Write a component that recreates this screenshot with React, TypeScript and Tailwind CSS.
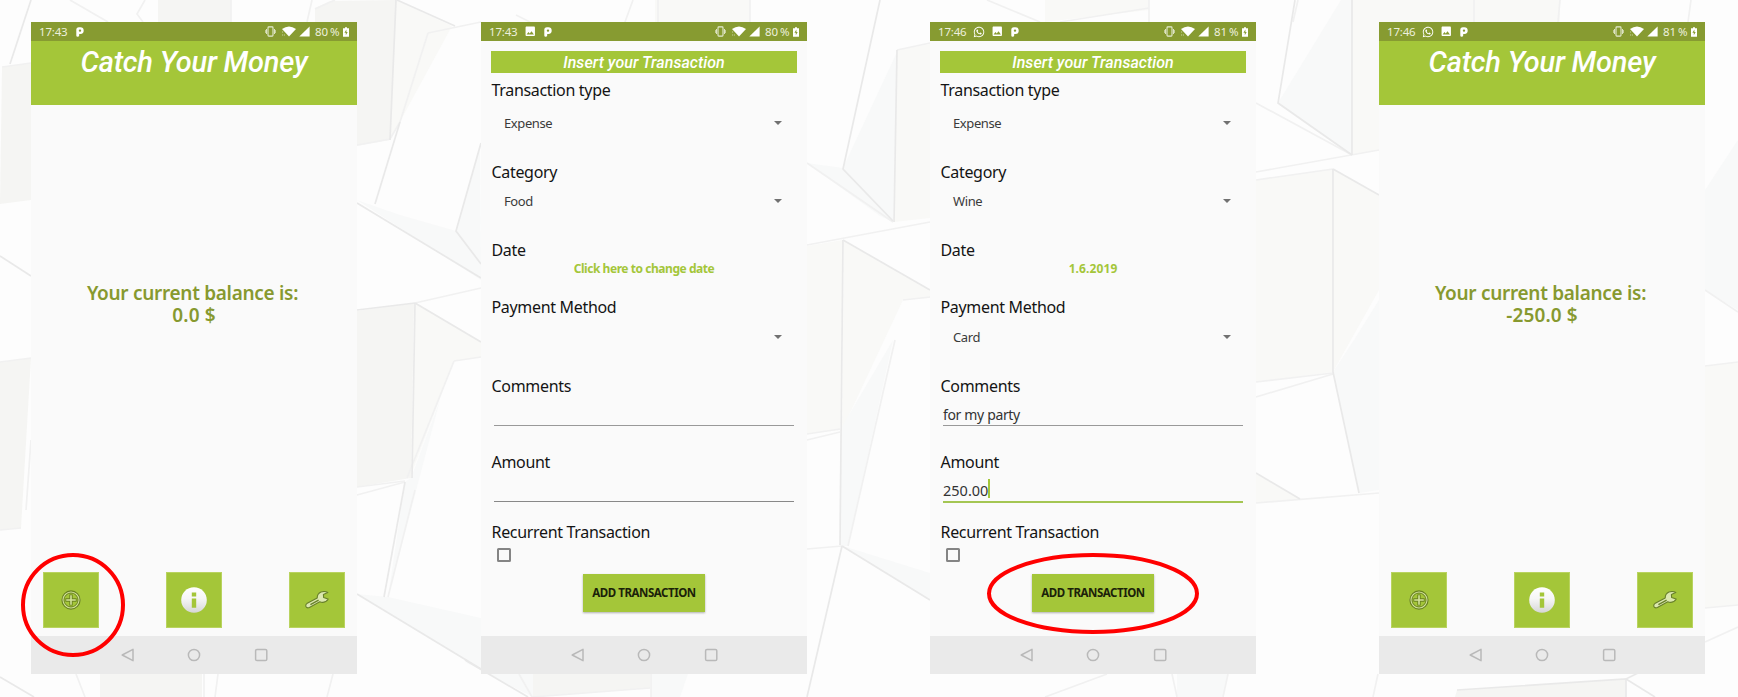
import type { ReactNode } from "react";
import { FaWhatsapp } from "react-icons/fa";
import { MdImage } from "react-icons/md";

type Notice = "whatsapp" | "image" | "p";

const warmFaces = [
  "2,67 31,63 31,200 0,204",
  "0,362 31,358 21,528 0,530",
  "100,674 202,674 202,697 100,697",
  "158,0 231,0 231,22 158,22",
  "315,8 330,1 396,0 390,140 357,146 357,22 315,22",
  "357,311 414,303 411,478 357,487",
  "533,674 650,674 650,688 533,697",
  "1457,690 1626,679 1626,697 1455,697",
];
const creamFaces = [
  "655,0 750,0 750,22 655,22",
  "1705,366 1738,362 1738,605 1705,608",
  "396,0 452,26 390,140",
  "415,303 481,342 481,357 454,361 411,475",
  "1045,0 1149,0 1149,10 1045,22",
  "897,50 930,44 930,218 894,222",
  "807,246 843,240 840,430 807,434",
  "844,240 930,290 930,298 903,300 842,430",
  "1353,0 1379,0 1379,150 1353,155",
  "1256,180 1333,169 1333,372 1256,382",
  "1334,169 1379,195 1379,290 1334,370",
  "1352,0 1560,0 1560,22 1352,22",
  "1256,474 1300,499 1256,503",
];
const coolFaces = [
  "480,144 456,231 481,264",
  "357,200 400,215 456,231 481,264 481,280",
  "388,597 481,618 481,669 357,594",
  "411,478 440,400 388,597 405,482",
  "897,52 843,168 893,222",
  "807,163 843,168 893,222 880,216",
  "840,430 893,340 848,546 840,546",
  "843,546 930,573 930,600",
  "1341,0 1278,103 1352,155 1353,0",
  "1379,300 1354,340 1333,372 1359,493 1379,490",
  "1738,140 1705,190 1705,290 1738,310",
  "1177,674 1228,674 1223,697 1177,697",
  "465,662 533,674 533,697",
  "651,674 688,674 680,697 651,697",
];
const strongEdges = [
  "0,256 31,276",
  "0,677 34,697",
  "10,64 31,0",
  "397,0 455,26",
  "396,0 390,140",
  "400,122 375,204",
  "357,203 481,278",
  "481,143 456,231 481,264",
  "357,310 415,303",
  "415,303 412,478",
  "415,303 481,342",
  "405,482 384,597",
  "357,594 481,669",
  "465,660 528,697",
  "880,0 843,169 893,221",
  "897,50 894,222",
  "843,240 930,290",
  "843,240 840,545",
  "842,546 807,697",
  "842,546 930,600",
  "1295,0 1278,103 1352,155",
  "1352,0 1352,155",
  "1333,169 1333,372 1359,493",
  "1333,169 1379,195",
  "1256,473 1300,499",
  "1457,690 1626,679 1626,697",
  "1626,679 1655,697",
  "1626,679 1640,672",
];
const softEdges = [
  "428,33 400,122",
  "2,67 31,63",
  "0,362 31,358",
  "0,530 21,528",
  "31,440 26,510",
  "76,674 85,697",
  "204,674 204,697",
  "218,674 215,697",
  "333,674 327,697",
  "70,0 108,22",
  "145,0 137,14 143,22",
  "231,0 231,22",
  "312,0 307,22",
  "315,9 335,0",
  "357,145 390,139 400,122",
  "428,33 481,22",
  "415,303 481,288",
  "357,487 405,481",
  "357,495 405,482",
  "415,490 388,597",
  "454,361 407,478",
  "454,361 481,357",
  "516,15 530,22",
  "633,0 625,22",
  "658,0 658,22",
  "750,0 750,22",
  "519,674 532,697 650,688",
  "651,674 651,697",
  "897,50 930,43",
  "807,163 893,222",
  "807,245 930,222",
  "807,434 840,429",
  "807,440 840,432",
  "895,340 848,546",
  "807,549 842,546",
  "903,300 930,297",
  "987,0 1040,22",
  "1060,22 1149,8",
  "1149,0 1149,22",
  "1107,674 1045,697",
  "1172,674 1177,697",
  "1228,674 1223,697",
  "1378,674 1373,697",
  "1298,0 1293,22",
  "1256,103 1352,155",
  "1256,172 1379,150",
  "1256,180 1333,169",
  "1256,382 1333,373",
  "1256,397 1333,374",
  "1256,503 1379,493",
  "1474,0 1474,22",
  "1560,0 1558,22",
  "1691,0 1688,22",
  "1705,290 1738,312",
  "1705,366 1738,362",
  "1705,608 1738,605",
  "1705,642 1738,627",
];

function Backdrop() {
  return (
    <svg className="absolute inset-0 h-[697px] w-[1738px]" viewBox="0 0 1738 697" fill="none" aria-hidden="true">
      {warmFaces.map((p) => (
        <polygon key={p} points={p} fill="#f5f5f3" />
      ))}
      {creamFaces.map((p) => (
        <polygon key={p} points={p} fill="#f9f9f7" />
      ))}
      {coolFaces.map((p) => (
        <polygon key={p} points={p} fill="#f8f9f9" />
      ))}
      {softEdges.map((p) => (
        <polyline key={p} points={p} stroke="#f1f1f1" strokeWidth="1.7" />
      ))}
      {strongEdges.map((p) => (
        <polyline key={p} points={p} stroke="#e9e9e9" strokeWidth="1.7" />
      ))}
    </svg>
  );
}

function PIcon() {
  return (
    <svg className="h-[10px] w-2" viewBox="0 0 8 10">
      <path
        fillRule="evenodd"
        fill="#fff"
        d="M0.3 2.8Q0.3 0.2 2.9 0.2H4.2A3.4 3.4 0 0 1 4.4 7H3.2V8.4Q3 9.8 1.7 9.8Q0.3 9.8 0.3 8.4ZM4 2.4A1.2 1.2 0 1 0 4 4.8A1.2 1.2 0 1 0 4 2.4Z"
      />
    </svg>
  );
}

function StatusBar({ time, battery, notices }: { time: string; battery: string; notices: Notice[] }) {
  return (
    <div className="flex h-[19px] shrink-0 items-center bg-[#879b31] pr-[8px] pl-[8px] text-[11.5px] leading-[19px] text-[#edf0de]">
      <span className="w-[28px] whitespace-nowrap tracking-[-0.2px]">{time}</span>
      <div className="ml-[8px] flex items-center gap-[8px]">
        {notices.map((n) => (
          <span key={n} className="flex w-[10px] justify-center text-white">
            {n === "whatsapp" && <FaWhatsapp className="size-[12px] shrink-0" />}
            {n === "image" && <MdImage className="size-[12.5px] shrink-0" />}
            {n === "p" && <PIcon />}
          </span>
        ))}
      </div>
      <div className="ml-auto flex items-center">
        <svg className="mr-[6px] h-[11px] w-[11px]" viewBox="0 0 11 11" fill="none" stroke="#e6ebd3">
          <rect x="3" y="0.9" width="5" height="9.2" rx="0.8" strokeWidth="1.1" />
          <path d="M1.5 3v5M9.5 3v5" strokeWidth=".9" />
          <path d="M0.4 4v3M10.6 4v3" strokeWidth=".7" />
        </svg>
        <svg className="mr-[3px] h-[11px] w-[14px]" viewBox="0 0 14 11">
          <path d="M0 3Q7-2 14 3L7 10.4Z" fill="#fff" />
          <path d="M0.6 5.5v1M0.6 8.5v1M2.4 8.5v1" stroke="#dfe6c8" strokeWidth=".8" />
        </svg>
        <svg className="mr-[5px] h-[11px] w-[11px]" viewBox="0 0 11 11">
          <path d="M0.3 10.5L10.6 0.4V10.5Z" fill="#fff" />
        </svg>
        <span className="w-[25px] whitespace-nowrap tracking-[-0.2px] [word-spacing:-0.6px]">{battery}</span>
        <svg className="ml-[3px] h-[10px] w-[6px]" viewBox="0 0 6 10">
          <path d="M2 0.2H4V1.2H6V9.8H0V1.2H2Z" fill="#fff" />
          <path d="M3.4 2.6L1.4 5.8H2.8V8.2L4.7 4.9H3.4Z" fill="#879b31" />
        </svg>
      </div>
    </div>
  );
}

function NavBar() {
  return (
    <div className="flex h-[38px] shrink-0 items-center bg-[#eaeaea] pl-[90px]">
      <svg className="h-[14px] w-[180px]" viewBox="0 0 180 14" fill="none" stroke="#b9b9b9" strokeWidth="1.5" strokeLinejoin="round">
        <path d="M1.2 7L12 1.3V12.7Z" />
        <circle cx="73" cy="7" r="5.6" />
        <rect x="134.6" y="1.4" width="11.2" height="11.2" rx="1.4" />
      </svg>
    </div>
  );
}

function Phone({ children, time, battery, notices }: { children: ReactNode; time: string; battery: string; notices: Notice[] }) {
  return (
    <section className="flex h-[652px] w-[326px] shrink-0 flex-col bg-[#fafafa]">
      <StatusBar time={time} battery={battery} notices={notices} />
      {children}
      <NavBar />
    </section>
  );
}

function Tile({ children }: { children: ReactNode }) {
  return <button className="flex size-14 items-center justify-center border border-[#b9d35f] bg-[#a4c639]">{children}</button>;
}

function Home({ balance, marked }: { balance: string; marked?: boolean }) {
  return (
    <>
      <header className="h-16 bg-[#a4c639] pt-[4px] text-center font-['Roboto'] text-[29px] leading-[34px] font-medium text-white italic">
        <h1 className="tracking-[-0.2px]">Catch Your Money</h1>
      </header>
      <div className="flex flex-1 flex-col pt-[177px] text-center text-[19px] leading-[22px] font-semibold text-[#87992f]">
        <p className="pr-[3px] tracking-[-0.3px]">Your current balance is:</p>
        <p className="tracking-[0.1px]">{balance}</p>
      </div>
      <div className="flex justify-between px-3 pb-2">
        <div className="relative">
          <Tile>
            <svg className="size-5" viewBox="0 0 20 20" fill="none">
              <circle cx="10" cy="10" r="8.1" stroke="#d3e39b" strokeWidth="2.4" />
              <circle cx="10" cy="10" r="9.1" stroke="#68811f" strokeWidth="1.1" />
              <circle cx="10" cy="10" r="7" stroke="#68811f" strokeWidth="1" />
              <path d="M10 4.4v11.2M4.4 10h11.2" stroke="#68811f" strokeWidth="3.4" />
              <path d="M10 5.2v9.6M5.2 10h9.6" stroke="#d3e39b" strokeWidth="1.6" />
            </svg>
          </Tile>
          {marked && (
            <svg className="pointer-events-none absolute -top-[19px] -left-[22px] h-[104px] w-[104px]" viewBox="0 0 104 104">
              <circle cx="52" cy="52" r="50" fill="none" stroke="#f00" strokeWidth="4" />
            </svg>
          )}
        </div>
        <Tile>
          <svg className="size-[26px]" viewBox="0 0 26 26">
            <defs>
              <linearGradient id="disc" x1="0" y1="0" x2="0" y2="1">
                <stop offset="0" stopColor="#fff" />
                <stop offset=".45" stopColor="#f6f6f6" />
                <stop offset="1" stopColor="#d6d6d6" />
              </linearGradient>
            </defs>
            <circle cx="13" cy="13" r="12.8" fill="url(#disc)" />
            <path d="M10.8 5.5h4.4v4h-4.4zM10.8 11.4h4.4v9.4h-4.4z" fill="#a4c639" />
          </svg>
        </Tile>
        <Tile>
          <svg className="h-[18px] w-6" viewBox="0 0 24 18" fill="#dce8b0" stroke="#68802a" strokeWidth="1.1" strokeLinejoin="round">
            <path d="M1.8 12.6L12.2 6.9Q12.2 2.6 16 1Q19.8-.1 22.8 1.4L18.4 3.4L18.6 6.5L23.2 8Q21.6 11 18 11.4Q16 11.5 14.8 10.8L4.4 16.6Q1.8 17.6.9 15.5Q.4 13.6 1.8 12.6Z" />
            <path d="M5.4 13.6L13.6 9.1" fill="none" strokeWidth="1.3" />
          </svg>
        </Tile>
      </div>
    </>
  );
}

function Label({ children }: { children: ReactNode }) {
  return <div className="h-5 pl-[0.5px] text-[16px] leading-5 tracking-[-0.32px] whitespace-nowrap text-[#141414]">{children}</div>;
}

function Spinner({ value }: { value: string }) {
  return (
    <div className="flex h-5 items-center justify-between pr-[15px] pl-[13px] text-[13px] leading-5 tracking-[-0.4px] text-[#3a3a3a]">
      <span>{value}</span>
      <svg className="h-1 w-2" viewBox="0 0 8 4">
        <path d="M0 0H8L4 4Z" fill="#717171" />
      </svg>
    </div>
  );
}

interface FormProps {
  category: string;
  date: string;
  method: string;
  comment: string;
  amount: string;
  marked?: boolean;
}

function Form({ category, date, method, comment, amount, marked }: FormProps) {
  return (
    <div className="flex flex-1 flex-col px-[10px] pt-[10px]">
      <h2 className="h-[22px] bg-[#a4c639] pt-px text-center font-['Roboto'] text-[16px] leading-[22px] font-medium tracking-[0.05px] text-white italic">
        Insert your Transaction
      </h2>
      <div className="mt-[7px]">
        <Label>Transaction type</Label>
      </div>
      <div className="mt-[13px]">
        <Spinner value="Expense" />
      </div>
      <div className="mt-[29px]">
        <Label>Category</Label>
      </div>
      <div className="mt-[9px]">
        <Spinner value={category} />
      </div>
      <div className="mt-[29px]">
        <Label>Date</Label>
      </div>
      <div className="h-[19px] text-center text-[12px] leading-[18px] font-bold text-[#a4c639]">
        <span className={marked ? "tracking-[0.1px]" : "tracking-[-0.45px]"}>{date}</span>
      </div>
      <div className="mt-[18px]">
        <Label>Payment Method</Label>
      </div>
      <div className="mt-[10px]">
        <Spinner value={method} />
      </div>
      <div className="mt-[29px]">
        <Label>Comments</Label>
      </div>
      <div className="mx-[3px] mt-[8px] h-[22px] border-b border-[#999] text-[14px] leading-[21px] tracking-[-0.35px] text-[#333]">{comment}</div>
      <div className="mt-[26px]">
        <Label>Amount</Label>
      </div>
      <div
        className={
          marked
            ? "mx-[3px] mt-[7px] flex h-[24px] border-b-2 border-[#a4c653] pt-px text-[14.5px] leading-5 text-[#333]"
            : "mx-[3px] mt-[8px] mb-px h-[22px] border-b border-[#888]"
        }
      >
        {amount}
        {marked && <span className="-mt-px h-[19px] w-[1.5px] bg-[#a4c639]" />}
      </div>
      <div className="mt-[19px]">
        <Label>Recurrent Transaction</Label>
      </div>
      <div className="mt-[6px] ml-[6px] size-[14px] rounded-[1.5px] border-2 border-[#848484]" />
      <div className="relative mt-[12px] flex justify-center">
        <button className="h-[38px] w-[122px] bg-[#a4c639] text-[11.5px] font-bold tracking-[-0.45px] whitespace-nowrap text-[#1b2109] shadow-[0_1px_2px_rgba(0,0,0,0.3)]">
          ADD TRANSACTION
        </button>
        {marked && (
          <svg className="pointer-events-none absolute -top-[21px] left-[47px] h-[82px] w-[212px]" viewBox="0 0 212 82">
            <ellipse cx="106" cy="40.5" rx="104" ry="38.5" fill="none" stroke="#f00" strokeWidth="4" />
          </svg>
        )}
      </div>
    </div>
  );
}

export default function App() {
  return (
    <main className="relative h-[697px] w-[1738px] overflow-hidden bg-[#fdfdfd] font-['Noto_Sans',sans-serif]">
      <Backdrop />
      <div className="relative flex pt-[22px] pl-[31px]">
        <Phone time="17:43" battery="80 %" notices={["p"]}>
          <Home balance="0.0 $" marked />
        </Phone>
        <div className="w-[124px] shrink-0" />
        <Phone time="17:43" battery="80 %" notices={["image", "p"]}>
          <Form category="Food" date="Click here to change date" method="" comment="" amount="" />
        </Phone>
        <div className="w-[123px] shrink-0" />
        <Phone time="17:46" battery="81 %" notices={["whatsapp", "image", "p"]}>
          <Form category="Wine" date="1.6.2019" method="Card" comment="for my party" amount="250.00" marked />
        </Phone>
        <div className="w-[123px] shrink-0" />
        <Phone time="17:46" battery="81 %" notices={["whatsapp", "image", "p"]}>
          <Home balance="-250.0 $" />
        </Phone>
      </div>
    </main>
  );
}
